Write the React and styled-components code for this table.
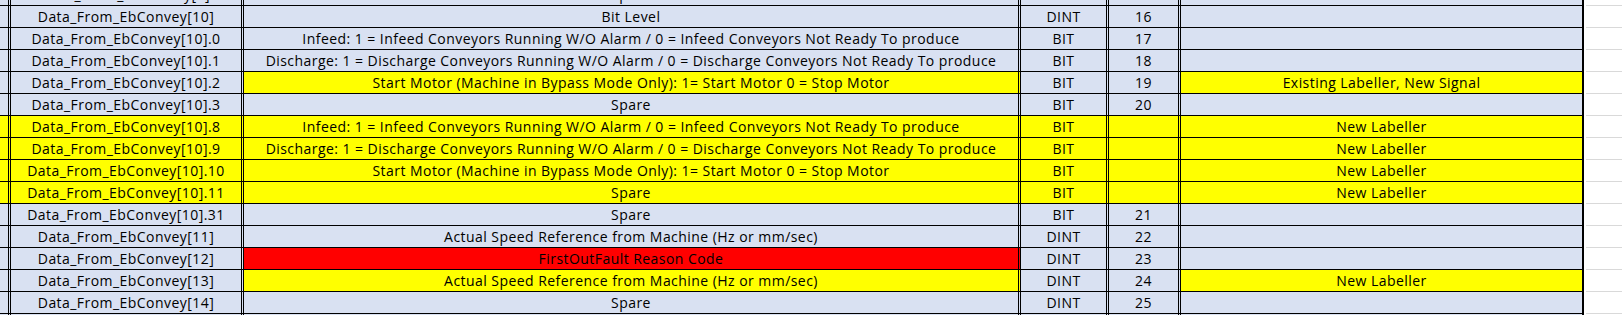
import React from "react";
import styled, { createGlobalStyle } from "styled-components";

const GlobalStyle = createGlobalStyle`
  html, body { margin: 0; padding: 0; background: #ffffff; overflow: hidden; }
  #root { width: 100%; }
`;

const FILL = {
  blue: "#D9E1F2",
  yellow: "#FFFF00",
  red: "#FF0000",
};

const COLS = [
  { key: "lead", width: 11, edge: "double" },
  { key: "name", width: 233, edge: "double" },
  { key: "desc", width: 777, edge: "double" },
  { key: "type", width: 88, edge: "double" },
  { key: "num", width: 72, edge: "double" },
  { key: "comment", width: 403, edge: "thick" },
];

const Viewport = styled.div`
  width: 100%;
  height: 315px;
  overflow: hidden;
  background: #ffffff;
`;

const Sheet = styled.div`
  display: flex;
  flex-direction: column;
  margin-top: -16px;
  font-family: "Open Sans", "Liberation Sans", sans-serif;
  font-size: 14px;
  letter-spacing: 0.45px;
  color: #000000;
`;

const Row = styled.div`
  display: flex;
  height: 22px;
`;

const Cell = styled.div`
  box-sizing: border-box;
  flex: 0 0 ${(p) => p.$width}px;
  width: ${(p) => p.$width}px;
  height: 22px;
  background: ${(p) => p.$fill};
  border-bottom: 1px solid #000000;
  border-right: ${(p) => (p.$edge === "thick" ? "2px solid #000000" : "3px double #000000")};
  display: flex;
  align-items: center;
  justify-content: center;
  line-height: 21px;
  white-space: nowrap;
  overflow: hidden;
`;

const GridFill = styled.div`
  flex: 1 1 auto;
  margin-left: 2px;
  height: 22px;
  box-sizing: border-box;
  border-bottom: 1px solid #d9d9d9;
  background: #ffffff;
`;

const N = (s) => `Data_From_EbConvey[${s}]`;
const INFEED =
  "Infeed: 1 = Infeed Conveyors Running W/O Alarm / 0 = Infeed Conveyors Not Ready To produce";
const DISCHARGE =
  "Discharge: 1 = Discharge Conveyors Running W/O Alarm / 0 = Discharge Conveyors Not Ready To produce";
const START = "Start Motor (Machine in Bypass Mode Only): 1= Start Motor 0 = Stop Motor";
const SPEED = "Actual Speed Reference from Machine (Hz or mm/sec)";

const rows = [
  { name: N(9), desc: "Spare", type: "DINT", num: "15", comment: "" },
  { name: N(10), desc: "Bit Level", type: "DINT", num: "16", comment: "" },
  { name: "Data_From_EbConvey[10].0", desc: INFEED, type: "BIT", num: "17", comment: "" },
  { name: "Data_From_EbConvey[10].1", desc: DISCHARGE, type: "BIT", num: "18", comment: "" },
  {
    name: "Data_From_EbConvey[10].2",
    desc: START,
    type: "BIT",
    num: "19",
    comment: "Existing Labeller, New Signal",
    fills: { desc: "yellow", comment: "yellow" },
  },
  { name: "Data_From_EbConvey[10].3", desc: "Spare", type: "BIT", num: "20", comment: "" },
  { name: "Data_From_EbConvey[10].8", desc: INFEED, type: "BIT", num: "", comment: "New Labeller", row: "yellow" },
  { name: "Data_From_EbConvey[10].9", desc: DISCHARGE, type: "BIT", num: "", comment: "New Labeller", row: "yellow" },
  { name: "Data_From_EbConvey[10].10", desc: START, type: "BIT", num: "", comment: "New Labeller", row: "yellow" },
  { name: "Data_From_EbConvey[10].11", desc: "Spare", type: "BIT", num: "", comment: "New Labeller", row: "yellow" },
  { name: "Data_From_EbConvey[10].31", desc: "Spare", type: "BIT", num: "21", comment: "" },
  { name: N(11), desc: SPEED, type: "DINT", num: "22", comment: "" },
  { name: N(12), desc: "FirstOutFault Reason Code", type: "DINT", num: "23", comment: "", fills: { desc: "red" } },
  {
    name: N(13),
    desc: SPEED,
    type: "DINT",
    num: "24",
    comment: "New Labeller",
    fills: { desc: "yellow", comment: "yellow" },
  },
  { name: N(14), desc: "Spare", type: "DINT", num: "25", comment: "" },
  { name: N(15), desc: "Spare", type: "DINT", num: "26", comment: "" },
];

function fillFor(row, key) {
  if (row.fills && row.fills[key]) return FILL[row.fills[key]];
  if (row.row) return FILL[row.row];
  return FILL.blue;
}

export default function App() {
  return (
    <>
      <GlobalStyle />
      <Viewport>
        <Sheet>
          {rows.map((row, i) => (
            <Row key={i}>
              {COLS.map((c) => (
                <Cell key={c.key} $width={c.width} $edge={c.edge} $fill={fillFor(row, c.key)}>
                  {c.key === "lead" ? "" : row[c.key]}
                </Cell>
              ))}
              <GridFill />
            </Row>
          ))}
        </Sheet>
      </Viewport>
    </>
  );
}
